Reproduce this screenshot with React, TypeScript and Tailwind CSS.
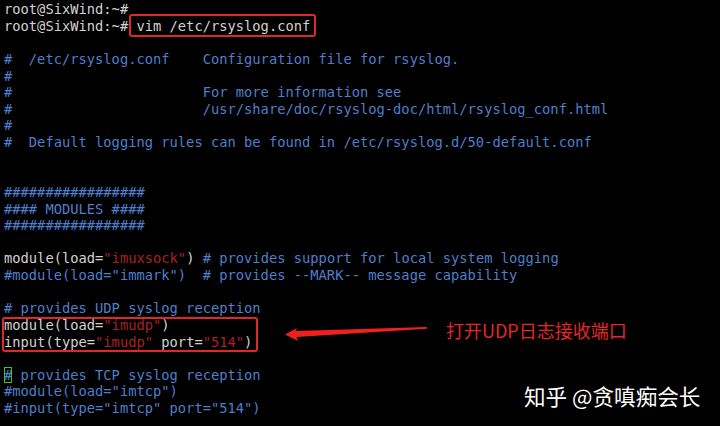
import React from "react";

type Seg = [string, "g" | "b" | "r" | "c"];

const colors: Record<string, string> = {
  g: "text-[#d2d2d2]",
  b: "text-[#4f7fcc]",
  r: "text-[#a82222]",
  c: "text-[#4f7fcc] outline outline-1 outline-[#35c335] -outline-offset-1",
};

const lines: Seg[][] = [
  [["root@SixWind:~#", "g"]],
  [["root@SixWind:~# vim /etc/rsyslog.conf", "g"]],
  [],
  [["#  /etc/rsyslog.conf    Configuration file for rsyslog.", "b"]],
  [["#", "b"]],
  [["#                       For more information see", "b"]],
  [["#                       /usr/share/doc/rsyslog-doc/html/rsyslog_conf.html", "b"]],
  [["#", "b"]],
  [["#  Default logging rules can be found in /etc/rsyslog.d/50-default.conf", "b"]],
  [],
  [],
  [["#################", "b"]],
  [["#### MODULES ####", "b"]],
  [["#################", "b"]],
  [],
  [
    ["module(load=", "g"],
    ['"imuxsock"', "r"],
    [") ", "g"],
    ["# provides support for local system logging", "b"],
  ],
  [['#module(load="immark")  # provides --MARK-- message capability', "b"]],
  [],
  [["# provides UDP syslog reception", "b"]],
  [
    ["module(load=", "g"],
    ['"imudp"', "r"],
    [")", "g"],
  ],
  [
    ["input(type=", "g"],
    ['"imudp"', "r"],
    [" port=", "g"],
    ['"514"', "r"],
    [")", "g"],
  ],
  [],
  [
    ["#", "c"],
    [" provides TCP syslog reception", "b"],
  ],
  [['#module(load="imtcp")', "b"]],
  [['#input(type="imtcp" port="514")', "b"]],
];

const App = () => {
  return (
    <div className="relative w-[720px] h-[426px] bg-black overflow-hidden">
      {/* terminal */}
      <div className="pt-[1px] pl-[4px] font-['DejaVu_Sans_Mono',monospace] text-[13.75px] leading-[16.625px] whitespace-pre">
        {lines.map((segs, i) => (
          <div key={i} className="h-[16.625px]">
            {segs.map(([text, c], j) => (
              <span key={j} className={colors[c]}>
                {text}
              </span>
            ))}
          </div>
        ))}
      </div>

      {/* annotation boxes */}
      <div className="absolute left-[129px] top-[14px] w-[187px] h-[23px] border-2 border-[#e0282a] rounded-[3px]" />
      <div className="absolute left-[2px] top-[317px] w-[256px] h-[35px] border-2 border-[#e0282a] rounded-[3px]" />

      {/* arrow */}
      <svg className="absolute left-0 top-0 pointer-events-none" width="720" height="426" viewBox="0 0 720 426">
        <polygon
          points="285,334.5 297,328 295.5,331 427,327 427,328.8 296.5,337 298,341"
          fill="#f0201e"
        />
      </svg>

      <div className="absolute left-[446px] top-[318px] text-[18px] leading-[24px] text-[#e3282a] font-['Noto_Sans_CJK_SC',sans-serif]">
        打开UDP日志接收端口
      </div>

      <div className="absolute left-[524px] top-[382px] text-[21.6px] leading-[28px] text-white font-['Noto_Sans_CJK_SC',sans-serif]">
        知乎 @贪嗔痴会长
      </div>
    </div>
  );
};

export default App;
